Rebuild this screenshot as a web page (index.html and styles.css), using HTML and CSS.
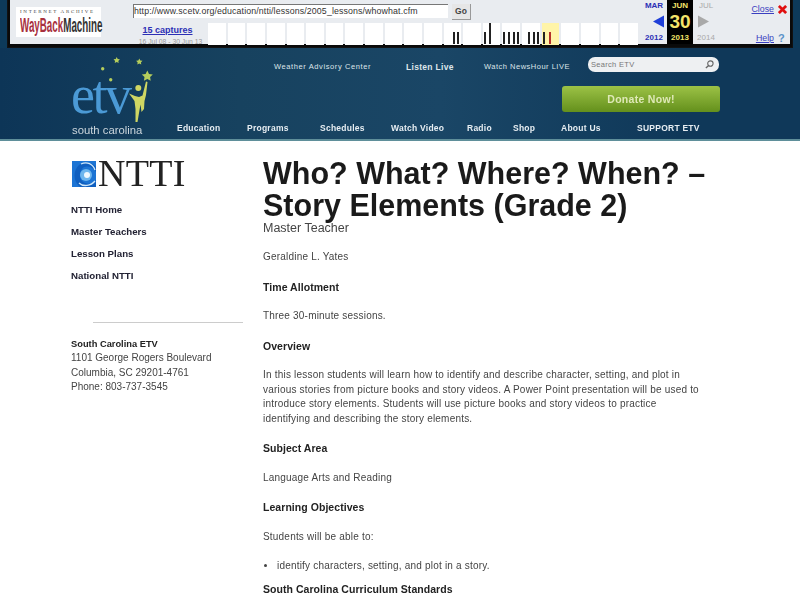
FILE: index.html
```html
<!DOCTYPE html>
<html lang="en">
<head>
<meta charset="utf-8">
<title>Who? What? Where? When? – Story Elements (Grade 2)</title>
<link rel="stylesheet" href="styles.css">
</head>
<body>
<div class="top">
  <div class="wb">
    <div class="wb-logo">
      <div class="ia">INTERNET ARCHIVE</div>
      <div class="wm"><span class="wm-a">WayBack</span><span class="wm-b">Machine</span></div>
    </div>
    <div class="wb-mid">
      <div class="url-row">
        <div class="url">http://www.scetv.org/education/ntti/lessons/2005_lessons/whowhat.cfm</div>
        <div class="go">Go</div>
      </div>
      <div class="cap-row">
        <div class="caps">
          <a class="caps-link">15 captures</a>
          <span class="caps-date">16 Jul 08 - 30 Jun 13</span>
        </div>
        <div class="timeline">
          <div class="cell"></div><div class="cell"></div><div class="cell"></div><div class="cell"></div>
          <div class="cell"></div><div class="cell"></div><div class="cell"></div><div class="cell"></div>
          <div class="cell"></div><div class="cell"></div><div class="cell"></div><div class="cell"></div>
          <div class="cell c-a"><i class="bar b1"></i><i class="bar b1"></i></div>
          <div class="cell"></div>
          <div class="cell c-b"><i class="bar b1"></i><i class="bar b2"></i></div>
          <div class="cell c-c"><i class="bar b1"></i><i class="bar b1"></i><i class="bar b1"></i><i class="bar b1"></i></div>
          <div class="cell c-d"><i class="bar b1"></i><i class="bar b1"></i><i class="bar b1"></i></div>
          <div class="cell now c-e"><i class="bar b1"></i><i class="bar b1 red"></i></div>
          <div class="cell"></div><div class="cell"></div><div class="cell"></div><div class="cell"></div>
        </div>
      </div>
    </div>
    <div class="cal">
      <div class="cal-col">
        <b class="mon">MAR</b>
        <svg class="arrow arrow-l" viewBox="0 0 12 13"><path d="M12 0V13L0 6.500Z" fill="#1f3fd8"/></svg>
        <b class="yr">2012</b>
      </div>
      <div class="cal-col cur">
        <b class="mon">JUN</b>
        <b class="day">30</b>
        <b class="yr">2013</b>
      </div>
      <div class="cal-col off">
        <span class="mon">JUL</span>
        <svg class="arrow arrow-r" viewBox="0 0 12 13"><path d="M0 0V13L12 6.500Z" fill="#a9a9a9"/></svg>
        <span class="yr">2014</span>
      </div>
    </div>
    <div class="links">
      <div class="link-row"><a>Close</a><svg class="x" viewBox="0 0 10 10"><path d="M1 1L9 9M9 1L1 9" stroke="#e01010" stroke-width="3"/></svg></div>
      <div class="link-row"><a>Help</a><span class="q">?</span></div>
    </div>
  </div>
</div>

<header class="site">
  <div class="logo">
    <span class="etv">etv</span>
    <svg class="stars" viewBox="0 0 60 70" aria-hidden="true">
      <g fill="#b5cd5c">
        <path d="M19.700 0l1 2 2.200.3-1.600 1.600.4 2.200-2-1-2 1 .4-2.200-1.600-1.600 2.200-.3z"/>
        <path d="M42.300 1.500l1 2 2.200.3-1.600 1.600.4 2.200-2-1-2 1 .4-2.200-1.600-1.600 2.200-.3z"/>
        <circle cx="5.700" cy="11.700" r="1.700"/><circle cx="13.700" cy="22.700" r="1.700"/>
        <path d="M50.300 13.500l1.700 3.400 3.800.5-2.700 2.700.6 3.700-3.400-1.800-3.400 1.800.6-3.700-2.700-2.700 3.800-.5z"/>
      </g>
      <circle cx="41.300" cy="31" r="3" fill="#cfd663"/>
      <path fill="#cfd663" d="M32 36.500L38 39L42 40L45.500 38.500L49 24.500L50.500 25L49 38L47.500 44L47 52L44.500 55L43.500 47.500L42.500 53L40.500 65L38.500 65L38.500 52L37.500 44Z"/>
    </svg>
    <span class="sc">south carolina</span>
  </div>
  <div class="head-main">
    <div class="util">
      <a class="u1">Weather Advisory Center</a>
      <a class="u2">Listen Live</a>
      <a class="u3">Watch NewsHour LIVE</a>
      <div class="search"><span>Search ETV</span>
        <svg viewBox="0 0 10 10"><circle cx="6" cy="4" r="3" fill="none" stroke="#666" stroke-width="1.200"/><path d="M4 6L1 9" stroke="#666" stroke-width="1.500"/></svg>
      </div>
    </div>
    <div class="donate-row"><div class="donate">Donate Now!</div></div>
    <nav class="nav">
      <a class="n1">Education</a><a class="n2">Programs</a><a class="n3">Schedules</a><a class="n4">Watch Video</a><a class="n5">Radio</a><a class="n6">Shop</a><a class="n7">About Us</a><a class="n8">SUPPORT ETV</a>
    </nav>
  </div>
</header>

<div class="page">
  <aside class="side">
    <div class="ntti">
      <svg class="ntti-ic" viewBox="0 0 24 26" aria-hidden="true">
        <rect width="24" height="26" fill="#1c74d4"/>
        <path d="M7 25C1 20 1 9 7 4C12 0 20 1 24 6V11C20 5 13 4 10 8C6 13 8 20 13 22C17 24 21 22 24 19V26H8Z" fill="#0f5fc0"/>
        <path d="M9 3C15 0 21 3 23 9M7 22C11 26 19 25 23 20" fill="none" stroke="#cfe8fa" stroke-width="1.300"/>
        <circle cx="14" cy="14" r="6" fill="#6db6ee"/>
        <circle cx="15" cy="14" r="3" fill="#eef8fe"/>
      </svg>
      <span>NTTI</span>
    </div>
    <ul class="side-nav">
      <li>NTTI Home</li>
      <li>Master Teachers</li>
      <li>Lesson Plans</li>
      <li>National NTTI</li>
    </ul>
    <hr class="rule">
    <address class="addr">
      <b>South Carolina ETV</b><br>
      1101 George Rogers Boulevard<br>
      Columbia, SC 29201-4761<br>
      Phone: 803-737-3545
    </address>
  </aside>
  <main class="main">
    <h1>Who? What? Where? When? – Story Elements (Grade 2)</h1>
    <div class="mt">Master Teacher</div>
    <p>Geraldine L. Yates</p>
    <h2>Time Allotment</h2>
    <p>Three 30-minute sessions.</p>
    <h2>Overview</h2>
    <p>In this lesson students will learn how to identify and describe character, setting, and plot in various stories from picture books and story videos. A Power Point presentation will be used to introduce story elements. Students will use picture books and story videos to practice identifying and describing the story elements.</p>
    <h2>Subject Area</h2>
    <p>Language Arts and Reading</p>
    <h2>Learning Objectives</h2>
    <p>Students will be able to:</p>
    <ul class="obj"><li>identify characters, setting, and plot in a story.</li></ul>
    <h2 class="last">South Carolina Curriculum Standards</h2>
  </main>
</div>
</body>
</html>
```
FILE: styles.css
```css
* { box-sizing: border-box; }
html, body { margin: 0; height: 600px; overflow: hidden; }
body { background: #fff; color: #333; font-family: "Liberation Sans", Arial, sans-serif; filter: blur(.35px); }
a { cursor: pointer; }

.top { background: #0d3a5a; padding: 0 8px 0; height: 48px; }
.wb { display: flex; height: 47px; background: #e9ecf0; border: solid #0a0a0a; border-width: 0 2px 3px; box-shadow: 0 0 0 1px #111; }
.wb-logo { width: 85px; height: 30px; margin: 7px 0 0 6px; background: #fff; padding: 2px 0 0 4px; flex: none; }
.ia { font-size: 5px; letter-spacing: 1.700px; color: #444; line-height: 6px; font-family: "Liberation Serif", serif; white-space: nowrap; }
.wm { font-size: 20px; line-height: 20px; font-weight: bold; white-space: nowrap; width: 160px; transform: scaleX(.49); transform-origin: left top; }
.wm-a { color: #a8303e; }
.wm-b { color: #333; }

.wb-mid { width: 507px; margin-left: 32px; flex: none; }
.url-row { display: flex; align-items: flex-start; height: 23px; padding-top: 4px; }
.url { width: 315px; height: 14px; background: #fff; border: 1px solid #777; border-width: 1px 0 0 1px; font-size: 8.800px; letter-spacing: .12px; line-height: 13px; color: #333; white-space: nowrap; overflow: hidden; }
.go { width: 19px; height: 16px; margin-left: 4px; background: #e6e6e6; border: 1px solid #999; border-width: 0 1px 1px 0; font-size: 8.500px; font-weight: bold; line-height: 15px; text-align: center; color: #444; }
.cap-row { display: flex; height: 22px; }
.caps { width: 75px; flex: none; text-align: center; display: flex; flex-direction: column; }
.caps-link { font-size: 9px; font-weight: bold; color: #2c2fb5; text-decoration: underline; line-height: 13px; margin-top: 1px; padding-right: 6px; }
.caps-date { font-size: 6.800px; color: #999; line-height: 9px; white-space: nowrap; }
.timeline { display: flex; gap: 2px; height: 22px; width: 430px; }
.cell { height: 22px; flex: 0 0 17.640px; background: #fff; display: flex; align-items: flex-end; padding-bottom: 1px; }
.cell.now { background: #fff4a8; }
.c-a { padding-left: 9px; gap: 2px; }
.c-b { padding-left: 1px; gap: 3px; }
.c-c { padding-left: 1px; gap: 2.700px; }
.c-d { padding-left: 6px; gap: 2.500px; }
.c-e { padding-left: 1px; gap: 4px; }
.bar { width: 2px; background: #222; display: block; flex: none; }
.b1 { height: 12px; }
.b2 { height: 21px; }
.red { background: #b5302a; }

.cal { display: flex; margin-left: 1px; flex: none; }
.cal-col { width: 26px; height: 44px; display: flex; flex-direction: column; align-items: center; color: #2c2fb5; font-size: 8px; }
.mon { line-height: 12px; margin-top: 0; }
.yr { line-height: 12px; margin-top: auto; }
.arrow { width: 11px; height: 13px; margin-top: 3px; }
.arrow-l { margin-left: 9px; }
.arrow-r { margin-right: 6px; }
.cur { background: #000; color: #f4e46a; }
.day { font-size: 19px; line-height: 19px; }
.off { color: #aaa; font-weight: normal; }
.links { flex: 1; display: flex; flex-direction: column; justify-content: space-between; align-items: flex-end; padding: 4px 3px 0 0; }
.link-row { display: flex; align-items: center; gap: 4px; font-size: 8.800px; color: #3a3fc0; }
.link-row a { text-decoration: underline; }
.x { width: 9px; height: 9px; }
.q { font-size: 11px; font-weight: bold; color: #5b93c9; line-height: 12px; width: 9px; }

.site { display: flex; height: 93px; margin-top: 0; background: linear-gradient(90deg, #0d3557, #17425f 30%, #1a4666 55%, #0f3859 85%); border-bottom: 2px solid #5f8f9a; padding-left: 71px; }
.logo { position: relative; width: 82px; height: 91px; flex: none; }
.stars { position: absolute; left: 26px; top: 9px; width: 60px; height: 70px; }
.etv { position: absolute; left: 0; top: 29px; font: 54px/36px "Liberation Serif", serif; letter-spacing: -2.500px; color: #4b9ad6; }
.sc { position: absolute; left: 1px; top: 76px; font-size: 11.300px; line-height: 12px; color: #cbd5dc; white-space: nowrap; }
.head-main { flex: 1; display: flex; flex-direction: column; }
.util { display: flex; align-items: center; height: 26px; padding-top: 9px; font-size: 7.500px; color: #dde5ea; white-space: nowrap; }
.u1 { margin-left: 121px; width: 132px; letter-spacing: .6px; margin-top: 2px; }
.u2 { width: 78px; font-size: 8.500px; font-weight: bold; letter-spacing: .3px; margin-top: 2px; }
.u3 { width: 104px; letter-spacing: .5px; margin-top: 2px; }
.search { width: 131px; height: 15px; background: #eef0f2; border-radius: 7px; margin-top: -2px; padding: 0 5px 0 3px; display: flex; justify-content: space-between; align-items: center; color: #777; letter-spacing: .3px; }
.search svg { width: 9px; height: 9px; }
.donate-row { height: 37px; padding: 12px 0 0 409px; }
.donate { width: 158px; height: 26px; border-radius: 3px; background: linear-gradient(#9cc246, #64901c); color: #dfe9b8; font-size: 10.500px; font-weight: bold; text-align: center; line-height: 26px; letter-spacing: .3px; }
.nav { display: flex; font-size: 8.500px; font-weight: bold; color: #e6edf2; letter-spacing: .25px; padding-top: 12px; white-space: nowrap; }
.n1 { margin-left: 24px; width: 70px; }
.n2 { width: 73px; }
.n3 { width: 71px; }
.n4 { width: 76px; }
.n5 { width: 46px; }
.n6 { width: 48px; }
.n7 { width: 76px; }

.page { display: flex; padding: 17px 0 0 71px; }
.side { width: 172px; flex: none; margin-right: 20px; }
.ntti { display: flex; align-items: center; height: 30px; }
.ntti-ic { width: 24px; height: 26px; margin: 1px 2px 0 1px; }
.ntti span { font: 38px/30px "Liberation Serif", serif; color: #222; letter-spacing: .3px; }
.side-nav { list-style: none; margin: 15px 0 0; padding: 0; font-size: 9.700px; font-weight: bold; color: #223; }
.side-nav li { height: 22px; line-height: 14px; }
.rule { margin: 31px 0 0 22px; border: 0; border-top: 1px solid #ccc; height: 0; width: 150px; }
.addr { margin-top: 14px; font-style: normal; font-size: 10px; line-height: 14.400px; color: #444; }
.addr b { color: #222; font-size: 9.300px; }

.main { width: 450px; font-size: 10px; line-height: 14.500px; color: #444; letter-spacing: .2px; margin-top: -1px; }
.main h1 { margin: 0; font-size: 30.500px; line-height: 32px; color: #1a1a1a; letter-spacing: 0; font-weight: bold; }
.mt { font-size: 12.500px; line-height: 14px; letter-spacing: 0; }
.main p { margin: 15px 0; width: 438px; }
.main h2 { margin: 15px 0; font-size: 10.500px; line-height: 14.500px; color: #222; letter-spacing: .05px; }
.obj { margin: 15px 0 8px; padding-left: 14px; }
.main h2.last { margin-top: 8px; }
```
